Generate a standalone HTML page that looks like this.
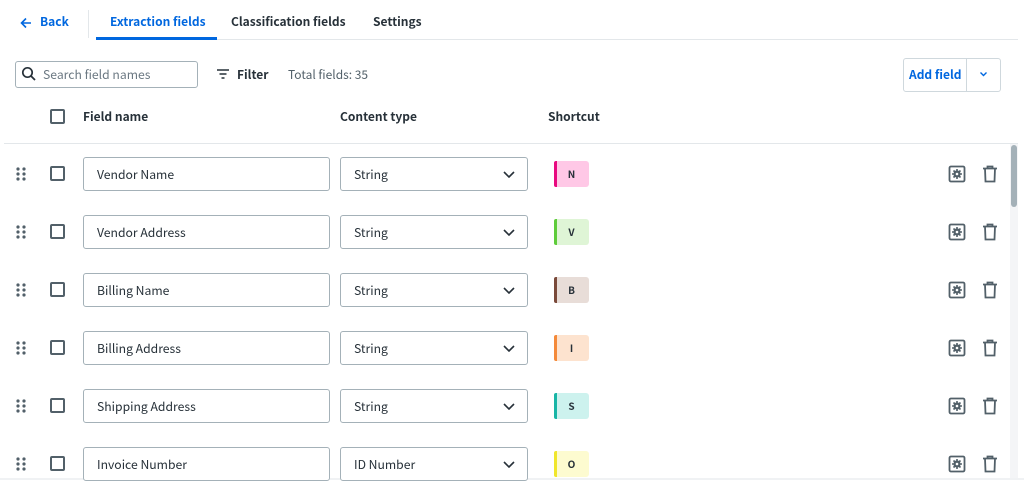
<!DOCTYPE html><html><head><style>
*{box-sizing:border-box;margin:0;padding:0}
body{width:1024px;height:480px;overflow:hidden;background:#fff;font-family:"Noto Sans CJK JP","Liberation Sans",sans-serif;color:#273139;font-size:12.2px;position:relative}
.a{position:absolute}
.tab{position:absolute;top:13px;font-size:12px;font-weight:600;line-height:18px}
.inp{position:absolute;border:1px solid #a4b1b8;border-radius:3px;background:#fff;height:34px;padding-left:13px;line-height:32px;font-size:12.2px}
.cb{position:absolute;width:15px;height:15px;border:2px solid #526069;border-radius:2px}
.badge{position:absolute;left:554px;width:35px;height:26px;border-radius:3px;font-size:10px;font-weight:700;text-align:center;line-height:26px}
.badge i{position:absolute;left:0;top:0;bottom:0;width:3px;border-radius:2px 0 0 2px}
.hd{position:absolute;top:108px;font-weight:600;font-size:12px}
</style></head><body>
<svg class="a" style="left:19px;top:16px" width="14" height="14" viewBox="0 0 14 14"><path d="M12 7H3M7 2.5L2.5 7 7 11.5" stroke="#0067df" stroke-width="1.6" fill="none"/></svg>
<div class="tab" style="left:40px;color:#0067df">Back</div>
<div class="a" style="left:88px;top:10px;width:1px;height:28px;background:#e3e7ea"></div>
<div class="tab" style="left:110px;color:#0067df">Extraction fields</div>
<div class="a" style="left:96px;top:37px;width:121px;height:3px;background:#0067df"></div>
<div class="tab" style="left:231px">Classification fields</div>
<div class="tab" style="left:373px">Settings</div>
<div class="a" style="left:217px;top:39px;width:801px;height:1px;background:#e3e7ea"></div>
<div class="inp" style="left:15px;top:61px;width:183px;height:27px;line-height:25px;padding-left:27px;color:#6b7882">Search field names</div>
<svg class="a" style="left:21px;top:66px" width="16" height="16" viewBox="0 0 16 16"><circle cx="6.5" cy="6.5" r="4.7" stroke="#273139" stroke-width="1.7" fill="none"/><path d="M10 10l4 4" stroke="#273139" stroke-width="1.8"/></svg>
<svg class="a" style="left:217px;top:69px" width="12" height="10" viewBox="0 0 12 10"><path d="M0 1h12M2.5 5h7M4.5 9h3" stroke="#273139" stroke-width="1.4"/></svg>
<div class="a" style="left:237px;top:66px;font-weight:600;font-size:12px">Filter</div>
<div class="a" style="left:288px;top:66px;color:#526069;font-size:12px">Total fields: 35</div>
<div class="a" style="left:903px;top:58px;width:98px;height:34px;border:1px solid #cfd8dd;border-radius:3px"></div>
<div class="a" style="left:966px;top:58px;width:1px;height:34px;background:#cfd8dd"></div>
<div class="a" style="left:909px;top:66px;color:#0067df;font-weight:600;font-size:12px">Add field</div>
<svg class="a" style="left:979px;top:71px" width="9" height="6" viewBox="0 0 9 6"><path d="M1.5 1.5l3 3 3-3" stroke="#0067df" stroke-width="1.4" fill="none"/></svg>
<div class="cb" style="left:50px;top:109px"></div>
<div class="hd" style="left:83px">Field name</div>
<div class="hd" style="left:340px">Content type</div>
<div class="hd" style="left:548px">Shortcut</div>
<div class="a" style="left:4px;top:143px;width:1014px;height:1px;background:#e3e7ea"></div>
<div class="a" style="left:1010px;top:144px;width:8px;height:336px;background:#f4f5f7"></div>
<div class="a" style="left:1011px;top:145px;width:6px;height:62px;border-radius:3px;background:#a4b1b8"></div>
<div class="a" style="left:0;top:478px;width:1024px;height:2px;background:#f0f2f4"></div>
<div id="rows"></div>
<script>
var d=[["Vendor Name","String","N","#ffc8e6","#e8097f"],["Vendor Address","String","V","#dff5d6","#5ecc3a"],["Billing Name","String","B","#e8ddd8","#7a4a3a"],["Billing Address","String","I","#fde3cf","#f48a3a"],["Shipping Address","String","S","#cdf2ee","#18b5a6"],["Invoice Number","ID Number","O","#fdfbd0","#f0e62c"]];
var h="";d.forEach(function(r,i){var c=174+58*i;
h+='<svg class="a" style="left:16px;top:'+(c-7)+'px" width="10" height="14" viewBox="0 0 10 14"><g fill="#526069"><circle cx="2" cy="2" r="1.6"/><circle cx="8" cy="2" r="1.6"/><circle cx="2" cy="7" r="1.6"/><circle cx="8" cy="7" r="1.6"/><circle cx="2" cy="12" r="1.6"/><circle cx="8" cy="12" r="1.6"/></g></svg>';
h+='<div class="cb" style="left:50px;top:'+(c-8)+'px"></div>';
h+='<div class="inp" style="left:83px;top:'+(c-17)+'px;width:247px">'+r[0]+'</div>';
h+='<div class="inp" style="left:340px;top:'+(c-17)+'px;width:188px">'+r[1]+'</div>';
h+='<svg class="a" style="left:503px;top:'+(c-3)+'px" width="12" height="7" viewBox="0 0 12 7"><path d="M1 1l5 5 5-5" stroke="#273139" stroke-width="1.6" fill="none"/></svg>';
h+='<div class="badge" style="top:'+(c-13)+'px;background:'+r[3]+'"><i style="background:'+r[4]+'"></i>'+r[2]+'</div>';
h+='<svg class="a" style="left:948px;top:'+(c-9)+'px" width="18" height="18" viewBox="0 0 18 18"><rect x="1.5" y="1.5" width="15" height="15" rx="1.5" stroke="#526069" stroke-width="1.8" fill="none"/><circle cx="9" cy="9" r="3.6" fill="#526069"/><path d="M9 4v10M4 9h10M5.5 5.5l7 7M12.5 5.5l-7 7" stroke="#526069" stroke-width="1.6"/><circle cx="9" cy="9" r="1.3" fill="#fff"/></svg>';
h+='<svg class="a" style="left:982px;top:'+(c-9)+'px" width="16" height="18" viewBox="0 0 16 18"><path d="M1 3.5h14M5.5 3.5V1.5h5v2M3 3.5l.5 13h9l.5-13" stroke="#526069" stroke-width="1.8" fill="none"/></svg>';
});document.getElementById("rows").outerHTML=h;
</script>
</body></html>
